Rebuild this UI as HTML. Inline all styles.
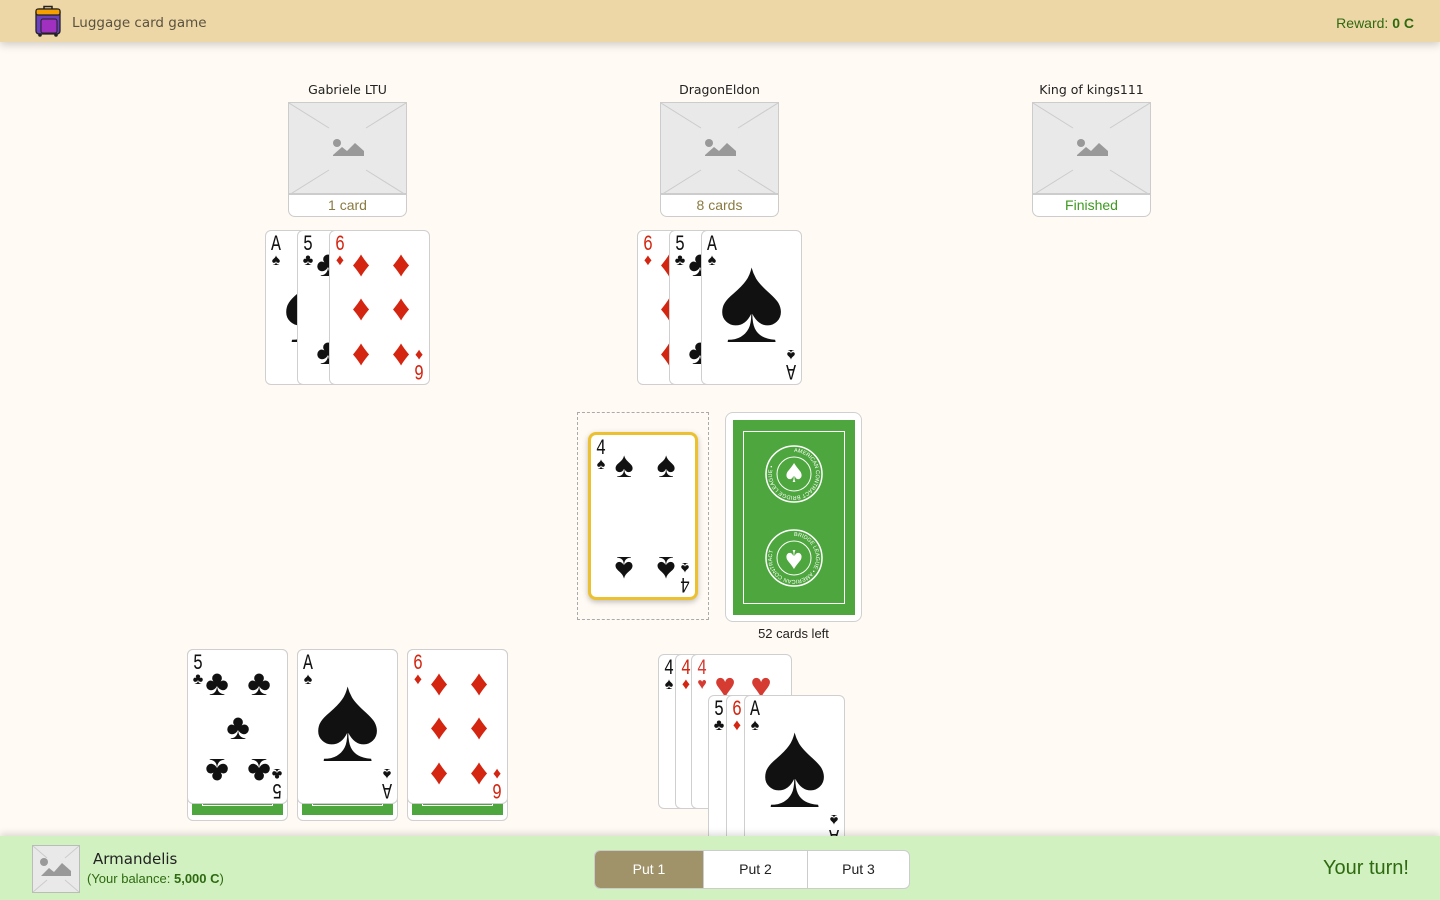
<!DOCTYPE html>
<html><head><meta charset="utf-8">
<style>
*{box-sizing:border-box;margin:0;padding:0}
body{width:1440px;height:900px;overflow:hidden;background:#fffaf3;font-family:"DejaVu Sans","Liberation Sans",sans-serif;position:relative}
.top{position:absolute;left:0;top:0;width:1440px;height:42px;background:#eed7a6;box-shadow:0 3px 8px rgba(0,0,0,.18);z-index:5}
.top .t{position:absolute;left:72px;top:15px;font-size:13.5px;color:#5a5240}
.top .r{position:absolute;right:26px;top:15px;font-family:"Liberation Sans",sans-serif;font-size:14px;color:#2e6a10}
.pl{position:absolute;width:119px;text-align:center}
.pl .n{font-size:12.5px;color:#222;height:21px;padding-top:1px}
.av{width:119px;height:115px;border:1px solid #ccc;border-radius:0 0 7px 7px;background:#fff;overflow:hidden}
.av .img{height:92px;background:#e9e9e9;border-bottom:2px solid #ccc;position:relative}
.av .s{font-family:"Liberation Sans",sans-serif;font-size:14px;line-height:20px}
.card{position:absolute;width:101px;height:155px;background:#fff;border:1px solid #cfcfcf;border-radius:6px;overflow:hidden;font-family:"Liberation Serif",serif}
.ix{position:absolute;left:2px;top:3px;text-align:center;width:16px;line-height:1}
.ix b{display:block;font-weight:normal;font-size:22px;font-family:"Liberation Mono",monospace;transform:scaleX(.75)}
.ix i{display:block;font-style:normal;font-size:16px;margin-top:-3px}
.ix.bt{left:auto;top:auto;right:2px;bottom:3px;transform:rotate(180deg)}
.p{position:absolute;font-size:36px;line-height:1;transform:translate(-50%,-50%)}
.p.f{transform:translate(-50%,-50%) rotate(180deg)}
.ace{position:absolute;left:50%;top:46%;transform:translate(-50%,-50%);font-size:124px;line-height:1}
.red{color:#d42511}.blk{color:#111}.hr{color:#d63b32}
.bar{position:absolute;left:0;top:836px;width:1440px;height:64px;background:#d2f1c1;box-shadow:0 -3px 6px rgba(0,0,0,.12);z-index:5}
</style></head><body>

<div class="top">
<svg style="position:absolute;left:35px;top:5px" width="26" height="32" viewBox="0 0 26 32">
<path d="M9 4 V1.5 H17 V4" fill="none" stroke="#222" stroke-width="1.5"/>
<rect x="1" y="4" width="24" height="25" rx="3" fill="#6a3fc0" stroke="#222" stroke-width="1.3"/>
<rect x="1" y="4" width="24" height="6" rx="2" fill="#f5a000" stroke="#222" stroke-width="1.3"/>
<rect x="6" y="14" width="16" height="14" rx="2" fill="#a030c0" stroke="#222" stroke-width="1"/>
<circle cx="5" cy="30" r="1.8" fill="#222"/><circle cx="21" cy="30" r="1.8" fill="#222"/>
</svg>
<div class="t">Luggage card game</div>
<div class="r">Reward: <b>0 C</b></div>
</div>

<div class="pl" style="left:288px;top:81px"><div class="n">Gabriele LTU</div><div class="av"><div class="img"><svg width="117" height="92"><path d="M0 0L40 25M117 0L77 25M0 92L40 67M117 92L77 67" stroke="#ccc"/><circle cx="48" cy="40" r="4" fill="#999"/><path d="M44 52 L53 44 L58 48 L66 40 L75 48 V53 H44Z" fill="#999"/></svg></div><div class="s" style="color:#8a7a40">1 card</div></div></div>
<div class="pl" style="left:660px;top:81px"><div class="n">DragonEldon</div><div class="av"><div class="img"><svg width="117" height="92"><path d="M0 0L40 25M117 0L77 25M0 92L40 67M117 92L77 67" stroke="#ccc"/><circle cx="48" cy="40" r="4" fill="#999"/><path d="M44 52 L53 44 L58 48 L66 40 L75 48 V53 H44Z" fill="#999"/></svg></div><div class="s" style="color:#8a7a40">8 cards</div></div></div>
<div class="pl" style="left:1032px;top:81px"><div class="n">King of kings111</div><div class="av"><div class="img"><svg width="117" height="92"><path d="M0 0L40 25M117 0L77 25M0 92L40 67M117 92L77 67" stroke="#ccc"/><circle cx="48" cy="40" r="4" fill="#999"/><path d="M44 52 L53 44 L58 48 L66 40 L75 48 V53 H44Z" fill="#999"/></svg></div><div class="s" style="color:#3d9a1e">Finished</div></div></div>

<div class="card blk" style="left:265px;top:230px"><div class="ix"><b>A</b><i>♠</i></div><div class="ace">♠</div></div>
<div class="card blk" style="left:297px;top:230px"><div class="ix"><b>5</b><i>♣</i></div><span class="p" style="left:30px;top:33px">♣</span><span class="p" style="left:30px;top:121px">♣</span></div>
<div class="card red" style="left:329px;top:230px"><div class="ix"><b>6</b><i>♦</i></div><span class="p" style="left:31px;top:33px">♦</span><span class="p" style="left:71px;top:33px">♦</span><span class="p" style="left:31px;top:77px">♦</span><span class="p" style="left:71px;top:77px">♦</span><span class="p" style="left:31px;top:122px">♦</span><span class="p" style="left:71px;top:122px">♦</span><div class="ix bt"><b>6</b><i>♦</i></div></div>

<div class="card red" style="left:637px;top:230px"><div class="ix"><b>6</b><i>♦</i></div><span class="p" style="left:31px;top:33px">♦</span><span class="p" style="left:31px;top:77px">♦</span><span class="p" style="left:31px;top:122px">♦</span></div>
<div class="card blk" style="left:669px;top:230px"><div class="ix"><b>5</b><i>♣</i></div><span class="p" style="left:30px;top:33px">♣</span><span class="p" style="left:30px;top:121px">♣</span></div>
<div class="card blk" style="left:701px;top:230px"><div class="ix"><b>A</b><i>♠</i></div><div class="ace">♠</div><div class="ix bt"><b>A</b><i>♠</i></div></div>

<div style="position:absolute;left:577px;top:412px;width:132px;height:208px;border:1px dashed #aaa"></div>
<div class="card blk" style="left:588px;top:432px;width:110px;height:168px;border:3px solid #ecc131;border-radius:8px;box-shadow:0 2px 6px rgba(0,0,0,.25)"><div class="ix"><b>4</b><i>♠</i></div><span class="p" style="left:33px;top:30px">♠</span><span class="p" style="left:75px;top:30px">♠</span><span class="p f" style="left:33px;top:134px">♠</span><span class="p f" style="left:75px;top:134px">♠</span><div class="ix bt"><b>4</b><i>♠</i></div></div>

<div style="position:absolute;left:725px;top:412px;width:137px;height:210px;background:#fff;border:1px solid #d0d0d0;border-radius:8px">
<div style="position:absolute;left:7px;top:7px;width:122px;height:195px;background:#4ea63e">
<div style="position:absolute;left:10px;top:11px;width:102px;height:173px;border:1px solid #fff"></div>
<svg style="position:absolute;left:31px;top:24px" width="60" height="150" viewBox="0 0 60 150">
<g fill="none" stroke="#fff"><circle cx="30" cy="30" r="28" stroke-width="1.5"/><circle cx="30" cy="30" r="17"/><circle cx="30" cy="114" r="28" stroke-width="1.5"/><circle cx="30" cy="114" r="17"/></g>
<text x="30" y="38" font-size="26" fill="#fff" text-anchor="middle">♠</text>
<text x="30" y="122" font-size="26" fill="#fff" text-anchor="middle" transform="rotate(180 30 114)">♠</text>
<defs><path id="c1" d="M30 8 a22 22 0 1 1 -0.1 0"/><path id="c2" d="M30 92 a22 22 0 1 1 -0.1 0"/></defs>
<text font-size="5.5" fill="#fff" font-family="Liberation Sans"><textPath href="#c1">AMERICAN CONTRACT BRIDGE LEAGUE •</textPath></text>
<text font-size="5.5" fill="#fff" font-family="Liberation Sans"><textPath href="#c2">BRIDGE LEAGUE • AMERICAN CONTRACT</textPath></text>
</svg>
</div></div>
<div style="position:absolute;left:725px;top:626px;width:137px;text-align:center;font-family:'Liberation Sans',sans-serif;font-size:13px;color:#222">52 cards left</div>

<div style="position:absolute;left:187px;top:649px;width:101px;height:172px;background:#fff;border:1px solid #d0d0d0;border-radius:6px"><div style="position:absolute;left:4px;top:150px;right:4px;height:15px;background:#4ea63e"><div style="position:absolute;left:10px;right:10px;top:0;height:6px;border:1px solid #fff;border-top:none"></div></div></div>
<div style="position:absolute;left:297px;top:649px;width:101px;height:172px;background:#fff;border:1px solid #d0d0d0;border-radius:6px"><div style="position:absolute;left:4px;top:150px;right:4px;height:15px;background:#4ea63e"><div style="position:absolute;left:10px;right:10px;top:0;height:6px;border:1px solid #fff;border-top:none"></div></div></div>
<div style="position:absolute;left:407px;top:649px;width:101px;height:172px;background:#fff;border:1px solid #d0d0d0;border-radius:6px"><div style="position:absolute;left:4px;top:150px;right:4px;height:15px;background:#4ea63e"><div style="position:absolute;left:10px;right:10px;top:0;height:6px;border:1px solid #fff;border-top:none"></div></div></div>
<div class="card blk" style="left:187px;top:649px"><div class="ix"><b>5</b><i>♣</i></div><span class="p" style="left:29px;top:33px">♣</span><span class="p" style="left:71px;top:33px">♣</span><span class="p" style="left:50px;top:77px">♣</span><span class="p f" style="left:29px;top:121px">♣</span><span class="p f" style="left:71px;top:121px">♣</span><div class="ix bt"><b>5</b><i>♣</i></div></div>
<div class="card blk" style="left:297px;top:649px"><div class="ix"><b>A</b><i>♠</i></div><div class="ace">♠</div><div class="ix bt"><b>A</b><i>♠</i></div></div>
<div class="card red" style="left:407px;top:649px"><div class="ix"><b>6</b><i>♦</i></div><span class="p" style="left:31px;top:33px">♦</span><span class="p" style="left:71px;top:33px">♦</span><span class="p" style="left:31px;top:77px">♦</span><span class="p" style="left:71px;top:77px">♦</span><span class="p" style="left:31px;top:122px">♦</span><span class="p" style="left:71px;top:122px">♦</span><div class="ix bt"><b>6</b><i>♦</i></div></div>

<div class="card blk" style="left:658px;top:654px"><div class="ix"><b>4</b><i>♠</i></div></div>
<div class="card red" style="left:675px;top:654px"><div class="ix"><b>4</b><i>♦</i></div></div>
<div class="card hr" style="left:691px;top:654px"><div class="ix"><b>4</b><i>♥</i></div><span class="p" style="left:33px;top:31px">♥</span><span class="p" style="left:69px;top:31px">♥</span></div>
<div class="card blk" style="left:708px;top:695px"><div class="ix"><b>5</b><i>♣</i></div></div>
<div class="card red" style="left:726px;top:695px"><div class="ix"><b>6</b><i>♦</i></div></div>
<div class="card blk" style="left:744px;top:695px"><div class="ix"><b>A</b><i>♠</i></div><div class="ace">♠</div><div class="ix bt"><b>A</b><i>♠</i></div></div>

<div class="bar">
<div style="position:absolute;left:32px;top:9px;width:48px;height:48px;border:1px solid #bbb;background:#e9e9e9"><svg width="46" height="46"><path d="M0 0L14 12M46 0L32 12M0 46L14 34M46 46L32 34" stroke="#ccc"/><circle cx="11" cy="16" r="4" fill="#999"/><path d="M8 30 L16 22 L21 26 L29 17 L38 25 V30Z" fill="#999"/></svg></div>
<div style="position:absolute;left:93px;top:14px;font-size:15px;color:#222">Armandelis</div>
<div style="position:absolute;left:87px;top:35px;font-family:'Liberation Sans',sans-serif;font-size:13px;color:#2e6a10">(Your balance: <b>5,000 C</b>)</div>
<div style="position:absolute;left:594px;top:14px;width:316px;height:39px;border:1px solid #ccc;border-radius:6px;overflow:hidden;display:flex;font-family:'Liberation Sans',sans-serif;font-size:14px;background:#fff">
<div style="width:108px;background:#a0936a;color:#fff;text-align:center;line-height:37px">Put 1</div>
<div style="width:104px;border-left:1px solid #ccc;text-align:center;line-height:37px;color:#222">Put 2</div>
<div style="flex:1;border-left:1px solid #ccc;text-align:center;line-height:37px;color:#222">Put 3</div>
</div>
<div style="position:absolute;right:31px;top:21px;font-family:'Liberation Sans',sans-serif;font-size:20px;color:#2e6a10">Your turn!</div>
</div>
</body></html>
